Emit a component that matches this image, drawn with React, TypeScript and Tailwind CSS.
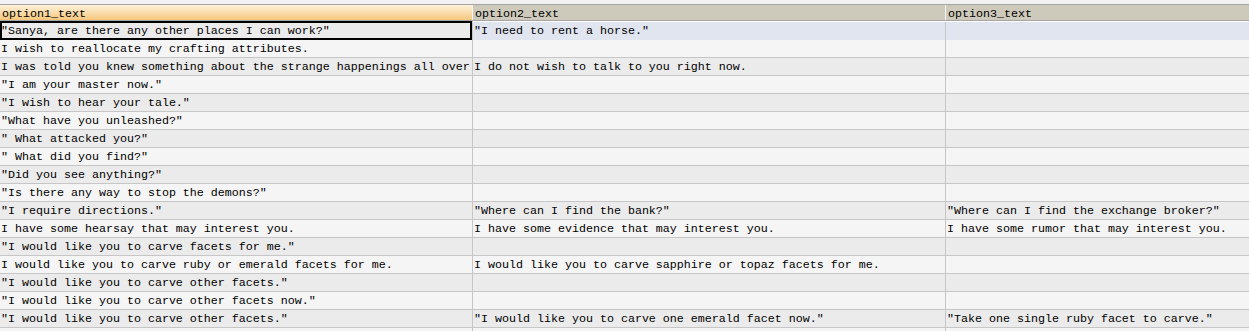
import React from 'react';

type Row = [string, string, string];

// Dialogue option rows, one per line of the grid.
const rows: Row[] = [
  ['"Sanya, are there any other places I can work?"', '"I need to rent a horse."', ''],
  ['I wish to reallocate my crafting attributes.', '', ''],
  ['I was told you knew something about the strange happenings all over', 'I do not wish to talk to you right now.', ''],
  ['"I am your master now."', '', ''],
  ['"I wish to hear your tale."', '', ''],
  ['"What have you unleashed?"', '', ''],
  ['" What attacked you?"', '', ''],
  ['" What did you find?"', '', ''],
  ['"Did you see anything?"', '', ''],
  ['"Is there any way to stop the demons?"', '', ''],
  ['"I require directions."', '"Where can I find the bank?"', '"Where can I find the exchange broker?"'],
  ['I have some hearsay that may interest you.', 'I have some evidence that may interest you.', 'I have some rumor that may interest you.'],
  ['"I would like you to carve facets for me."', '', ''],
  ['I would like you to carve ruby or emerald facets for me.', 'I would like you to carve sapphire or topaz facets for me.', ''],
  ['"I would like you to carve other facets."', '', ''],
  ['"I would like you to carve other facets now."', '', ''],
  ['"I would like you to carve other facets."', '"I would like you to carve one emerald facet now."', '"Take one single ruby facet to carve."'],
  ['', '', ''],
];

function HeaderCell({ label, active, last }: { label: string; active?: boolean; last?: boolean }) {
  return (
    <div
      className={`pl-[2px] pt-[2px] leading-[15px] whitespace-nowrap overflow-hidden
        ${last ? '' : 'border-r border-[#f4f4f4]'}
        ${active ? 'bg-gradient-to-b from-[#fdf1d9] to-[#f5c77c]' : 'bg-[#cdc9bb]'}`}
    >
      {label}
    </div>
  );
}

function GridRow({ row, index }: { row: Row; index: number }) {
  const selected = index === 0;
  const base = index % 2 === 0 ? 'bg-[#ebebeb]' : 'bg-[#f5f5f5]';
  const side = selected ? 'bg-[#e1e5ef]' : base;

  return (
    <div className="grid grid-cols-[473px_473px_1fr] h-[18px] border-b border-[#c6c6c6]">
      <div
        className={`pl-[1px] whitespace-nowrap overflow-hidden border-r border-[#c6c6c6] ${base}
          ${selected ? 'shadow-[inset_0_0_0_2px_#000] -mt-px h-[19px] pt-[2px] leading-[17px]' : 'pt-px leading-[16px]'}`}
      >
        {row[0]}
      </div>
      <div className={`pl-[1px] pt-px leading-[16px] whitespace-nowrap overflow-hidden border-r border-[#c6c6c6] ${side}`}>
        {row[1]}
      </div>
      <div className={`pl-[1px] pt-px leading-[16px] whitespace-nowrap overflow-hidden ${side}`}>{row[2]}</div>
    </div>
  );
}

export default function App() {
  return (
    <div
      className="w-[1249px] h-[331px] overflow-hidden bg-[#f1f1f1] pt-1 text-black
        font-['Liberation_Mono','Courier_New',monospace] text-[11.67px]"
    >
      {/* Column headers */}
      <div className="grid grid-cols-[473px_473px_1fr] h-[17px] border-y border-[#a4a4a4]">
        <HeaderCell label="option1_text" active />
        <HeaderCell label="option2_text" />
        <HeaderCell label="option3_text" last />
      </div>
      <div className="h-px bg-white" />

      {rows.map((row, i) => (
        <GridRow key={i} row={row} index={i} />
      ))}
    </div>
  );
}
